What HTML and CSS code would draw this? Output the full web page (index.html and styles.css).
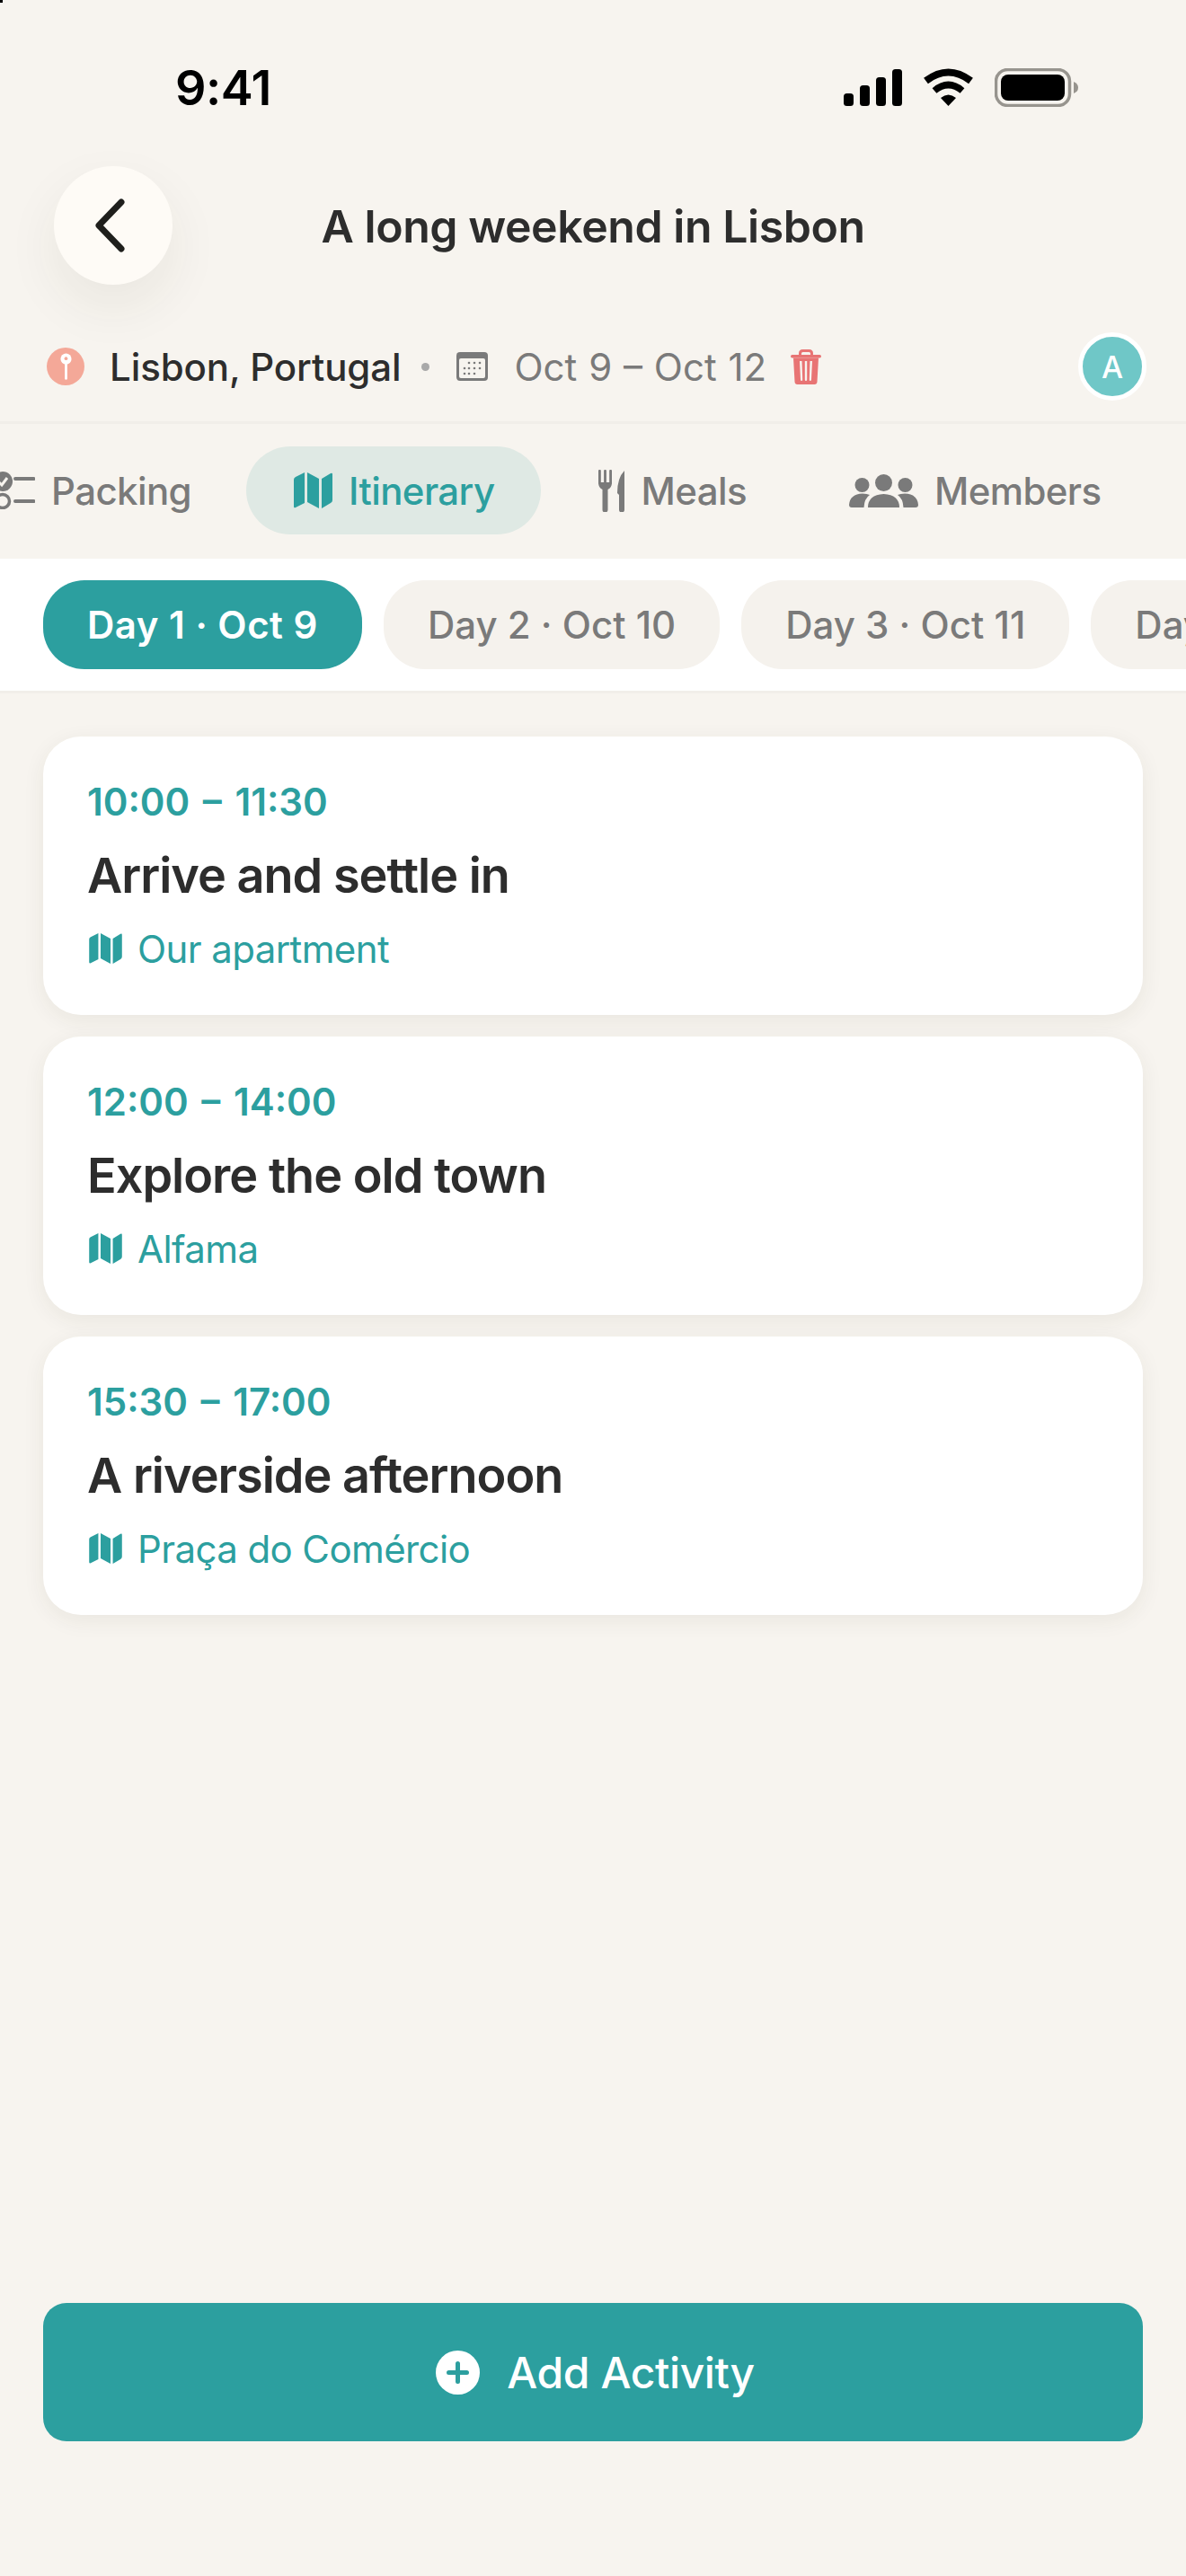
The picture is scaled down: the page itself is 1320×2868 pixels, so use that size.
FILE: index.html
```html
<!DOCTYPE html>
<html lang="en">
<head>
<meta charset="utf-8">
<title>A long weekend in Lisbon</title>
<link rel="stylesheet" href="styles.css">
</head>
<body>
<div class="page">
  <span class="corner"></span>
  <div class="status">
    <span class="clock">9:41</span>
    <div class="status-icons">
      <svg class="i-signal" viewBox="0 0 65 41"><rect x="0" y="27" width="11" height="14" rx="3.5"/><rect x="18" y="18" width="11" height="23" rx="3.5"/><rect x="36" y="9" width="11" height="32" rx="3.5"/><rect x="54" y="0" width="11" height="41" rx="3.5"/></svg>
      <svg class="i-wifi" viewBox="0 0 57 42"><path d="M3.5 14Q28.500 -5 53.500 14" fill="none" stroke="#000" stroke-width="8"/><path d="M13 25Q28.500 12 44 25" fill="none" stroke="#000" stroke-width="7.500"/><path d="M28.500 42L20 33Q28.500 26 37 33Z"/></svg>
      <svg class="i-battery" viewBox="0 0 93 43"><rect x="1.500" y="1.500" width="82" height="40" rx="13" fill="none" stroke="#97948e" stroke-width="3.500"/><rect x="7" y="7" width="71" height="29" rx="8"/><path d="M88 15Q93 17 93 21.500Q93 26 88 28Z" fill="#97948e"/></svg>
    </div>
  </div>

  <header class="header">
    <button class="back" aria-label="Back">
      <svg class="i-back" viewBox="0 0 40 62"><path d="M33 5L8 31L33 57" fill="none" stroke="#1f1f1c" stroke-width="7" stroke-linecap="round" stroke-linejoin="round"/></svg>
    </button>
    <h1 class="title">A long weekend in Lisbon</h1>
    <span></span>
  </header>

  <div class="meta">
    <span class="pin"><svg class="i-pin" viewBox="0 0 14 32"><circle cx="7" cy="7" r="6.500" fill="#fff"/><circle cx="7" cy="6.500" r="2" fill="#f4a898"/><rect x="5.500" y="11" width="3" height="21" rx="1.500" fill="#fff"/></svg></span>
    <span class="place">Lisbon, Portugal</span>
    <span class="dot"></span>
    <svg class="i-cal" viewBox="0 0 35 32"><rect width="35" height="32" rx="4" fill="#7a7a7a"/><rect x="3" y="7" width="29" height="22" rx="2" fill="#f7f4ef"/><g fill="#7a7a7a"><circle cx="14" cy="12" r="1.300"/><circle cx="20" cy="12" r="1.300"/><circle cx="26" cy="12" r="1.300"/><circle cx="9" cy="18" r="1.300"/><circle cx="14" cy="18" r="1.300"/><circle cx="20" cy="18" r="1.300"/><circle cx="26" cy="18" r="1.300"/><circle cx="9" cy="24" r="1.300"/><circle cx="14" cy="24" r="1.300"/><circle cx="20" cy="24" r="1.300"/></g></svg>
    <span class="dates">Oct 9 – Oct 12</span>
    <svg class="i-trash" viewBox="0 0 34 39"><path d="M10.500 6V4.500Q10.500 1.500 13.500 1.500H20.500Q23.500 1.500 23.500 4.500V6" fill="none" stroke="#e87474" stroke-width="3"/><rect y="6" width="34" height="3.500" rx="1.700" fill="#e87474"/><path fill-rule="evenodd" fill="#e87474" d="M3 9.500H31L29.500 36Q29.300 39 26.500 39H7.500Q4.700 39 4.500 36ZM10 13L11 33.500Q11 35 12.200 35Q13.300 35 13.200 33.500L12.500 13ZM15.800 13V33.500Q15.800 35 17 35Q18.200 35 18.200 33.500V13ZM21.500 13L20.800 33.500Q20.700 35 21.800 35Q23 35 23 33.500L24 13Z"/></svg>
    <span class="avatar">A</span>
  </div>

  <nav class="tabs">
    <div class="tab tab-first">
      <svg class="i-packing" viewBox="0 0 49 42"><circle cx="13" cy="11" r="11" fill="#7a7a7a"/><path d="M8 11L12 15L18 7" fill="none" stroke="#f7f4ef" stroke-width="3"/><circle cx="13" cy="33" r="7.500" fill="none" stroke="#7a7a7a" stroke-width="3.500"/><path d="M27 8H47.500M27 33H47.500" stroke="#7a7a7a" stroke-width="4" stroke-linecap="round"/></svg>
      <span>Packing</span>
    </div>
    <div class="tab tab-active">
      <svg class="i-map" viewBox="0 0 43 40"><path d="M0 8Q0 6 2 5L12 0V34L2 39Q0 40 0 38Z"/><path d="M15 0L28 7V40L15 33Z"/><path d="M31 7L41 1Q43 0 43 2V31Q43 33 41 34L31 40Z"/></svg>
      <span>Itinerary</span>
    </div>
    <div class="tab">
      <svg class="i-meals" viewBox="0 0 29 47"><g fill="#7a7a7a"><rect x="0" y="0" width="2.800" height="16" rx="1"/><rect x="6.100" y="0" width="2.800" height="16" rx="1"/><rect x="12.200" y="0" width="2.800" height="16" rx="1"/><path d="M0 14H15Q15 20 10.500 22V44.500A3 3 0 0 1 4.500 44.500V22Q0 20 0 14Z"/><path d="M29 1V44.500A3 3 0 0 1 23 44.500V28L21 26Q21 9 29 1Z"/></g></svg>
      <span>Meals</span>
    </div>
    <div class="tab">
      <svg class="i-members" viewBox="0 0 77 37"><g fill="#7a7a7a"><circle cx="38.500" cy="9.500" r="9.500"/><circle cx="14.500" cy="12" r="8"/><circle cx="62.500" cy="12" r="8"/><path d="M21 37Q21 23 38.500 22Q56 23 56 37Z"/><path d="M0 34Q1 22 15 21.500Q20 21.500 23 23Q17 27 16.500 37H3Q0 37 0 34Z"/><path d="M77 34Q76 22 62 21.500Q57 21.500 54 23Q60 27 60.500 37H74Q77 37 77 34Z"/></g></svg>
      <span>Members</span>
    </div>
  </nav>

  <div class="days">
    <span class="chip chip-active">Day 1 · Oct 9</span>
    <span class="chip">Day 2 · Oct 10</span>
    <span class="chip">Day 3 · Oct 11</span>
    <span class="chip">Day 4 · Oct 12</span>
  </div>

  <main class="list">
    <article class="card">
      <div class="time">10:00 – 11:30</div>
      <div class="name">Arrive and settle in</div>
      <div class="loc"><svg class="i-map-sm" viewBox="0 0 43 40"><path d="M0 8Q0 6 2 5L12 0V34L2 39Q0 40 0 38Z"/><path d="M15 0L28 7V40L15 33Z"/><path d="M31 7L41 1Q43 0 43 2V31Q43 33 41 34L31 40Z"/></svg><span>Our apartment</span></div>
    </article>
    <article class="card">
      <div class="time">12:00 – 14:00</div>
      <div class="name">Explore the old town</div>
      <div class="loc"><svg class="i-map-sm" viewBox="0 0 43 40"><path d="M0 8Q0 6 2 5L12 0V34L2 39Q0 40 0 38Z"/><path d="M15 0L28 7V40L15 33Z"/><path d="M31 7L41 1Q43 0 43 2V31Q43 33 41 34L31 40Z"/></svg><span>Alfama</span></div>
    </article>
    <article class="card">
      <div class="time">15:30 – 17:00</div>
      <div class="name">A riverside afternoon</div>
      <div class="loc"><svg class="i-map-sm" viewBox="0 0 43 40"><path d="M0 8Q0 6 2 5L12 0V34L2 39Q0 40 0 38Z"/><path d="M15 0L28 7V40L15 33Z"/><path d="M31 7L41 1Q43 0 43 2V31Q43 33 41 34L31 40Z"/></svg><span>Praça do Comércio</span></div>
    </article>
  </main>

  <div class="footer">
    <button class="add">
      <svg class="i-plus" viewBox="0 0 49 49"><circle cx="24.500" cy="24.500" r="24.500" fill="#fff"/><path d="M24.500 14.500V34.500M14.500 24.500H34.500" stroke="#2c9f9f" stroke-width="5" stroke-linecap="round"/></svg>
      <span>Add Activity</span>
    </button>
  </div>
</div>
</body>
</html>
```
FILE: styles.css
```css
* { box-sizing: border-box; }
html, body { margin: 0; padding: 0; }
body { background: #f7f4ef; font-family: Inter, "Liberation Sans", sans-serif; color: #2d2d2d; }
svg { display: block; flex: none; }
.page { position: relative; width: 1320px; height: 2868px; overflow: hidden; display: flex; flex-direction: column; background: #f7f4ef; }
.corner { position: absolute; left: 0; top: 0; width: 3px; height: 3px; background: #000; }

.status { height: 170px; padding: 24px 120px 0 195px; display: flex; align-items: center; justify-content: space-between; }
.clock { font-size: 54px; font-weight: 600; color: #000; letter-spacing: -0.5px; }
.status-icons { display: flex; align-items: center; }
.i-signal { width: 65px; height: 41px; margin-right: 23px; }
.i-wifi { width: 57px; height: 42px; margin-right: 23px; }
.i-battery { width: 93px; height: 43px; }

.header { margin-top: 15px; padding: 0 60px; display: grid; grid-template-columns: 132px 1fr 132px; align-items: center; }
.back { width: 132px; height: 132px; border: 0; padding: 0; border-radius: 50%; background: #fefbf6; box-shadow: 0 24px 60px rgba(60, 50, 30, 0.07); display: flex; align-items: center; justify-content: center; }
.i-back { width: 40px; height: 62px; margin-left: -8px; }
.title { margin: 2px 0 0; text-align: center; font-size: 50px; font-weight: 600; letter-spacing: -0.45px; color: #2d2d2d; line-height: 64px; }

.meta { height: 155px; padding: 30px 44px 0 52px; display: flex; align-items: center; border-bottom: 3px solid #f1eee9; }
.pin { width: 42px; height: 42px; border-radius: 50%; background: #f4a898; display: flex; align-items: center; justify-content: center; }
.i-pin { width: 13px; height: 30px; }
.place { margin-left: 28px; font-size: 42px; font-weight: 500; letter-spacing: -0.1px; color: #2d2d2d; }
.dot { margin-left: 23px; width: 9px; height: 9px; border-radius: 50%; background: #a9a9a9; }
.i-cal { margin-left: 30px; width: 35px; height: 32px; }
.dates { margin-left: 29px; font-size: 42px; word-spacing: 1px; color: #7a7a7a; }
.i-trash { margin-left: 27px; width: 34px; height: 39px; }
.avatar { margin-left: auto; width: 76px; height: 76px; border-radius: 50%; background: #6fc7c7; border: 5px solid #fff; color: #fff; font-size: 34px; font-weight: 500; display: flex; align-items: center; justify-content: center; }

.tabs { height: 150px; padding-top: 25px; margin-left: -60px; display: flex; gap: 14px; align-items: flex-start; }
.tab { height: 98px; padding: 0 50px; border-radius: 49px; display: flex; align-items: center; gap: 18px; font-size: 42px; font-weight: 500; letter-spacing: -0.6px; color: #7a7a7a; white-space: nowrap; }
.tab-first { padding-right: 47px; }
.tab-active { padding: 0 52px 0 53px; background: #dfe9e4; color: #2c9f9f; }
.i-packing { width: 49px; height: 42px; }
.i-map { width: 43px; height: 40px; fill: #2c9f9f; }
.i-meals { width: 29px; height: 47px; }
.i-members { width: 77px; height: 37px; }

.days { flex: none; height: 150px; padding: 24px 48px; background: #fff; border-bottom: 3px solid #f1eee9; display: flex; gap: 24px; overflow: hidden; }
.chip { flex: none; height: 99px; padding: 0 49px; border-radius: 46px; background: #f5f2ed; color: #7a7a7a; font-size: 42px; font-weight: 500; display: flex; align-items: center; white-space: nowrap; }
.chip-active { background: #2c9f9f; color: #fff; font-weight: 600; letter-spacing: 0.5px; }

.list { padding: 48px 48px 0; display: flex; flex-direction: column; gap: 24px; }
.card { height: 310px; padding: 48px 49px; border-radius: 42px; background: #fff; box-shadow: 0 6px 24px rgba(60, 50, 30, 0.07); }
.time { font-size: 42px; line-height: 50px; font-weight: 600; word-spacing: 4px; color: #2c9f9f; }
.name { margin-top: 25px; font-size: 54px; line-height: 64px; font-weight: 600; letter-spacing: -1px; color: #2d2d2d; }
.loc { margin-top: 23px; height: 52px; display: flex; align-items: center; gap: 17px; font-size: 42px; letter-spacing: -0.6px; color: #2c9f9f; }
.i-map-sm { margin-left: 2px; width: 37px; height: 34px; fill: #2c9f9f; }

.footer { margin-top: auto; padding: 0 48px 150px; }
.add { width: 100%; height: 154px; border: 0; padding: 0 0 0 5px; border-radius: 26px; background: #2c9f9f; color: #fff; font: 500 48px Inter, "Liberation Sans", sans-serif; letter-spacing: -0.4px; display: flex; align-items: center; justify-content: center; gap: 30px; }
.i-plus { width: 49px; height: 49px; }
```
